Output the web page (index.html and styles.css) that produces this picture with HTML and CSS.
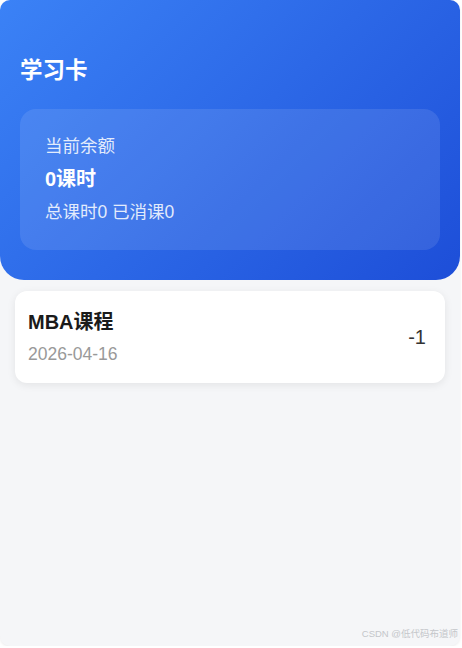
FILE: index.html
```html
<!DOCTYPE html>
<html lang="zh-CN">
<head>
    <meta charset="UTF-8">
    <meta name="viewport" content="width=device-width, initial-scale=1.0">
    <title>学习卡</title>
    <link rel="stylesheet" href="styles.css">
</head>
<body>
    <div class="page">
        <div class="header">
            <h1 class="title">学习卡</h1>
            <div class="balance">
                <p class="balance-label">当前余额</p>
                <p class="balance-value">0课时</p>
                <p class="balance-meta">总课时0 已消课0</p>
            </div>
        </div>

        <div class="list">
            <div class="record">
                <div class="record-info">
                    <h2 class="record-name">MBA课程</h2>
                    <p class="record-date">2026-04-16</p>
                </div>
                <span class="record-count">-1</span>
            </div>
        </div>

        <span class="watermark">CSDN @低代码布道师</span>
    </div>
</body>
</html>
```

FILE: styles.css
```css
* {
    margin: 0;
    padding: 0;
    box-sizing: border-box;
}

body {
    background: #fff;
    font-family: "Liberation Sans", Arial, "Noto Sans CJK SC", sans-serif;
}

.page {
    position: relative;
    width: 460px;
    height: 646px;
    background: #f5f6f8;
    border-radius: 10px;
    overflow: hidden;
    box-shadow: 0 1px 3px rgba(0, 0, 0, 0.08);
}

.header {
    height: 280px;
    padding: 56px 20px 0;
    background: linear-gradient(135deg, #3b82f6, #1d4ed8);
    border-radius: 0 0 24px 24px;
    color: #fff;
}

.title {
    font-size: 22.5px;
    font-weight: bold;
    line-height: 30px;
    margin-bottom: 23px;
}

.balance {
    height: 141px;
    padding: 25px 25px 0;
    background: rgba(255, 255, 255, 0.1);
    border-radius: 16px;
}

.balance-label {
    font-size: 17.5px;
    line-height: 24px;
    opacity: 0.85;
}

.balance-value {
    font-size: 20px;
    font-weight: bold;
    line-height: 24px;
    margin-top: 9px;
}

.balance-meta {
    font-size: 17.5px;
    line-height: 24px;
    margin-top: 9px;
    opacity: 0.85;
}

.list {
    padding: 11px 15px;
}

.record {
    display: flex;
    align-items: center;
    justify-content: space-between;
    height: 92px;
    padding: 0 19px 0 13px;
    background: #fff;
    border-radius: 12px;
    box-shadow: 0 2px 8px rgba(0, 0, 0, 0.08);
}

.record-name {
    font-size: 20px;
    font-weight: bold;
    line-height: 26px;
    color: #1a1a1a;
}

.record-date {
    font-size: 17.5px;
    line-height: 22px;
    margin-top: 8px;
    color: #999;
}

.record-count {
    font-size: 20px;
    color: #333;
}

.watermark {
    position: absolute;
    right: 2px;
    bottom: 6px;
    font-size: 9.5px;
    color: #c4c6ca;
}
```
